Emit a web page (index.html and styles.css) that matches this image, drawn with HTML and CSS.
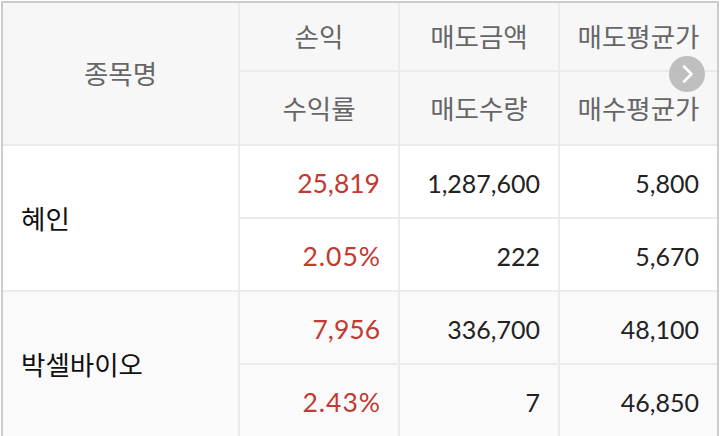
FILE: index.html
```html
<!DOCTYPE html>
<html lang="ko">
<head>
<meta charset="utf-8">
<link rel="stylesheet" href="styles.css">
</head>
<body>
<div class="wrap">
  <div class="grid">
    <div class="cell head name-head">종목명</div>
    <div class="cell head">손익</div>
    <div class="cell head">매도금액</div>
    <div class="cell head">매도평균가</div>
    <div class="cell head">수익률</div>
    <div class="cell head">매도수량</div>
    <div class="cell head">매수평균가</div>

    <div class="cell name">혜인</div>
    <div class="cell num red">25,819</div>
    <div class="cell num">1,287,600</div>
    <div class="cell num">5,800</div>
    <div class="cell num red pct">2.05%</div>
    <div class="cell num">222</div>
    <div class="cell num">5,670</div>

    <div class="cell name alt">박셀바이오</div>
    <div class="cell num red alt">7,956</div>
    <div class="cell num alt">336,700</div>
    <div class="cell num alt">48,100</div>
    <div class="cell num red pct alt">2.43%</div>
    <div class="cell num alt">7</div>
    <div class="cell num alt">46,850</div>
  </div>
  <button class="next" aria-label="다음">
    <svg width="36" height="36" viewBox="0 0 36 36"><path d="M15 10.5 L22.5 18 L15 25.5" fill="none" stroke="#fff" stroke-width="2.6" stroke-linecap="round" stroke-linejoin="round"/></svg>
  </button>
</div>
</body>
</html>
```

FILE: styles.css
```css
html, body {
  margin: 0;
  padding: 0;
  background: #ffffff;
  overflow: hidden;
}
body {
  font-family: Lato, "Noto Sans CJK KR", sans-serif;
}
.wrap {
  position: relative;
  margin: 1px 0 0 1px;
  width: 718px;
}
.grid {
  display: grid;
  grid-template-columns: 235px 158px 158px 157px;
  grid-template-rows: 67px 72px 71px 71px 71px 71px;
  gap: 2px;
  background: #ebebeb;
  border: 2px solid #cccccc;
  border-bottom: 0;
}
.cell {
  display: flex;
  align-items: center;
  font-size: 25px;
  background: #ffffff;
  color: #222222;
}
.head {
  background: #f7f7f7;
  color: #666666;
  justify-content: center;
  font-size: 26.5px;
  padding-bottom: 2px;
}
.name-head {
  grid-row: span 2;
}
.name {
  grid-row: span 2;
  padding-left: 18px;
  font-size: 26.5px;
  color: #111111;
  padding-bottom: 2px;
}
.num {
  justify-content: flex-end;
  padding-right: 18px;
  padding-top: 2px;
}
.red {
  color: #c23a30;
  font-size: 26.5px;
}
.pct {
  letter-spacing: 1px;
  padding-right: 17px;
}
.alt {
  background: #fafafa;
}
.next {
  position: absolute;
  left: 668px;
  top: 55px;
  width: 36px;
  height: 36px;
  border: 0;
  padding: 0;
  border-radius: 50%;
  background: rgba(175, 175, 175, 0.78);
  display: flex;
  align-items: center;
  justify-content: center;
}
.next svg {
  display: block;
}
```
